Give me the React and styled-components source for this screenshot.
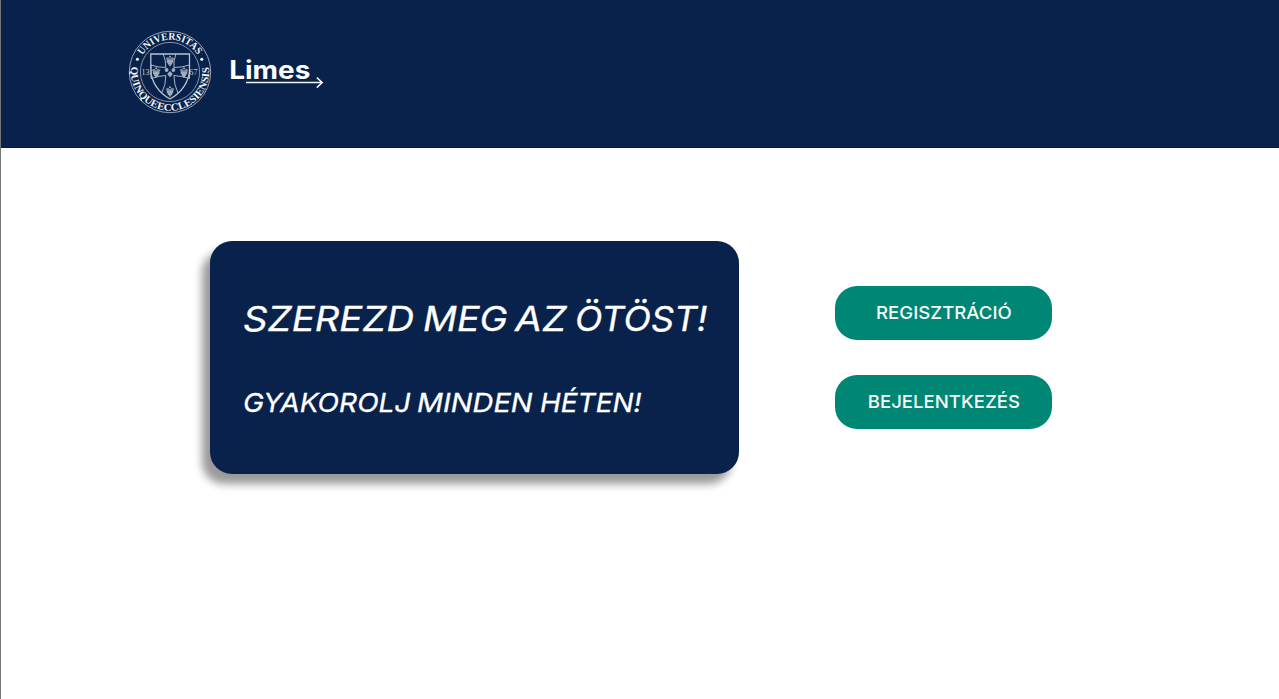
import React from "react";
import styled, { createGlobalStyle } from "styled-components";

const GlobalStyle = createGlobalStyle`
  * { box-sizing: border-box; }
  body { margin: 0; background: #fff; font-family: Inter, "Open Sans", sans-serif; }
`;

const Page = styled.div`
  min-height: 699px;
  border-left: 1px solid #777;
  background: #fff;
`;

const Header = styled.header`
  height: 148px;
  padding: 29px 0 0 127px;
  display: flex;
  align-items: flex-start;
  gap: 16px;
  background: #08224b;
  border-bottom: 1px solid #051b40;
`;

const Seal = styled.svg`
  width: 84px;
  height: 86px;
  display: block;
`;

const Wordmark = styled.svg`
  width: 100px;
  height: 50px;
  margin-top: 21px;
  display: block;
`;

const Main = styled.main`
  display: flex;
  align-items: flex-start;
  gap: 96px;
  padding: 93px 0 0 209px;
`;

const Card = styled.section`
  width: 529px;
  height: 233px;
  padding: 56px 0 0 33px;
  border-radius: 22px;
  background: #08224b;
  color: #fff;
  box-shadow: -8px 10px 8px rgba(0, 0, 0, 0.4);
`;

const Line = styled.p`
  display: flex;
  margin: 0 0 ${(p) => p.$gap || 0}px;
  font-size: ${(p) => p.$size}px;
  line-height: 44px;
  font-style: italic;
  font-weight: 400;
  -webkit-text-stroke: 0.3px #fff;
  white-space: pre;
`;

const Word = styled.span`
  flex: none;
  width: ${(p) => p.$width}px;
  transform: scaleX(${(p) => p.$stretch});
  transform-origin: left center;
`;

const Actions = styled.nav`
  display: flex;
  flex-direction: column;
  gap: 35px;
  padding-top: 45px;
`;

const Button = styled.button`
  width: 217px;
  height: 54px;
  padding: 0;
  border: 0;
  border-radius: 22px;
  background: #008675;
  color: #f7fbfa;
  font: 500 17.8px/54px Inter, sans-serif;
  cursor: pointer;
`;

const Label = styled.span`
  display: inline-block;
  transform: scaleX(1.045);
`;

const Grapes = ({ x, y }) => (
  <g transform={`translate(${x} ${y})`} fill="#c8d0dc" opacity=".8">
    <path d="M-4.4-2-2-3.4 0-1.5 2-3.4 4.4-2 2.4 1-2.4 1Z" opacity=".75" />
    <circle cx="0" cy="-3.8" r="1" />
    <circle cx="-2" cy="1" r="1.4" />
    <circle cx="2" cy="1" r="1.4" />
    <circle cx="0" cy="1.2" r="1.4" />
    <circle cx="-1" cy="3" r="1.3" />
    <circle cx="1" cy="3" r="1.3" />
    <circle cx="0" cy="4.7" r="1" />
  </g>
);

function UniversitySeal() {
  return (
    <Seal viewBox="128 29 84 86">
      <defs>
        <path id="arcTop" d="M142.4 55.4 A32.2 32.2 0 0 1 199.5 59" />
        <path id="arcBottom" d="M131.2 66.8 A39.1 39.1 0 1 0 208.8 66.8" />
      </defs>
      <g fill="none" stroke="#b9c3d1">
        <circle cx="170" cy="72" r="40.7" strokeWidth=".8" />
        <circle cx="170" cy="72" r="29.6" strokeWidth=".7" />
        <path d="M150.8 54H189.5V69C189.5 82 181 93 170 99C159 93 150.8 82 150.8 69Z" strokeWidth="1.3" />
        <path d="M163.3 54Q166 61 165.8 67.5Q158 67.5 151 65V78.5Q158 76 165.8 75.5Q166 85 161.7 93M175.8 54Q173.5 61 173.9 67.5Q182 67.5 189.5 65V78.5Q182 76 173.9 75.5Q174 85 178 93" strokeWidth=".9" />
      </g>
      <Grapes x={170} y={60.5} />
      <Grapes x={156.2} y={72} />
      <Grapes x={184} y={72} />
      <Grapes x={170} y={91} />
      <g fill="#c8d0dc" opacity=".8">
        <circle cx="166.6" cy="70" r="1.9" />
        <circle cx="173.4" cy="70" r="1.9" />
        <path d="M170 71l2.8 3L170 77.5l-2.8-3.5Z" />
      </g>
      <circle cx="137.4" cy="59.3" r="1.5" fill="#fff" />
      <circle cx="201.8" cy="59.3" r="1.5" fill="#fff" />
      <g fill="#f1f4f8" fontFamily="Liberation Serif, serif">
        <text fontSize="10.4" fontWeight="700">
          <textPath href="#arcTop" textLength="65.5" lengthAdjust="spacingAndGlyphs">UNIVERSITAS</textPath>
        </text>
        <text fontSize="10.4" fontWeight="700">
          <textPath href="#arcBottom" textLength="132" lengthAdjust="spacingAndGlyphs">QUINQUEECCLESIENSIS</textPath>
        </text>
        <text x="141.5" y="75" fontSize="8.2" fill="#c8d0dc">13</text>
        <text x="189.3" y="75" fontSize="8.2" fill="#c8d0dc">67</text>
      </g>
    </Seal>
  );
}

function LimesLogo() {
  return (
    <Wordmark viewBox="228 50 100 50">
      <text x="229.3" y="78.5" fontFamily="Inter, sans-serif" fontWeight="700" fontSize="25.5" fill="#fff" textLength="81" lengthAdjust="spacingAndGlyphs">Limes</text>
      <path d="M246 82.5H322M316.8 77.6L322.2 82.5L316.8 87.6" fill="none" stroke="#f1f4f8" strokeWidth="1.5" />
    </Wordmark>
  );
}

export default function App() {
  return (
    <Page>
      <GlobalStyle />
      <Header>
        <UniversitySeal />
        <LimesLogo />
      </Header>
      <Main>
        <Card>
          <Line $size={34.5} $gap={40}>
            <Word $width={180} $stretch={1.11}>SZEREZD </Word>
            <Word $width={92} $stretch={1.09}>MEG </Word>
            <Word $width={59.5} $stretch={1.13}>AZ </Word>
            <Word $width={134} $stretch={1.04}>ÖTÖST!</Word>
          </Line>
          <Line $size={26}>
            <Word $width={173.5} $stretch={1.08}>GYAKOROLJ </Word>
            <Word $width={123} $stretch={1.11}>MINDEN </Word>
            <Word $width={102} $stretch={1.075}>HÉTEN!</Word>
          </Line>
        </Card>
        <Actions>
          <Button><Label>REGISZTRÁCIÓ</Label></Button>
          <Button><Label>BEJELENTKEZÉS</Label></Button>
        </Actions>
      </Main>
    </Page>
  );
}
